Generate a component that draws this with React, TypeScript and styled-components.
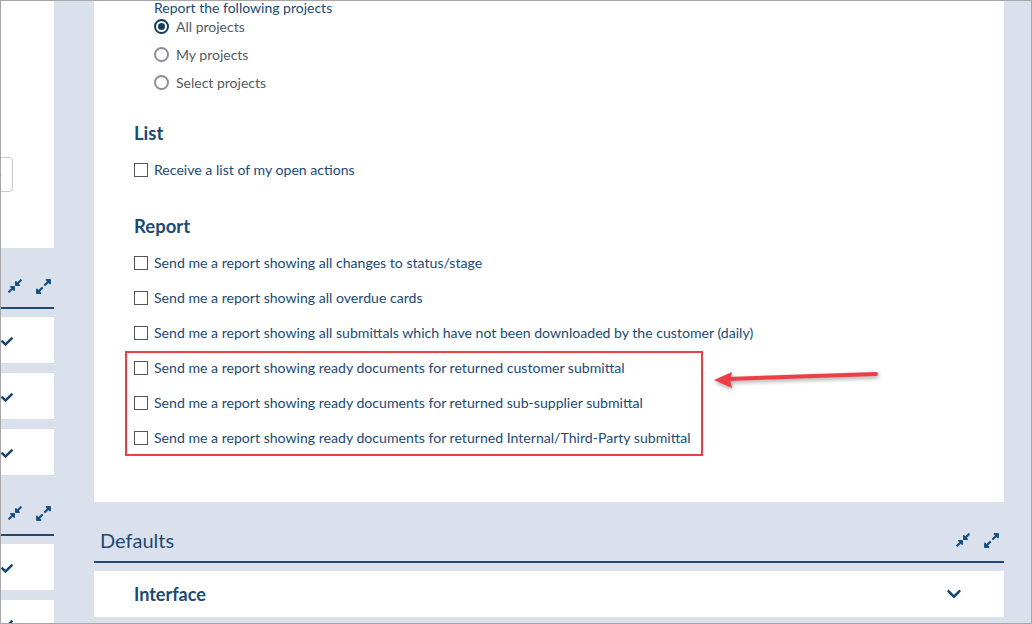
import React from 'react';
import styled, { createGlobalStyle } from 'styled-components';
import { FaCompressAlt, FaExpandAlt, FaCheck, FaChevronDown } from 'react-icons/fa';

const GlobalStyle = createGlobalStyle`
  html, body {
    margin: 0;
    padding: 0;
    background: #ffffff;
  }
  body {
    font-family: Lato, "Open Sans", "Liberation Sans", sans-serif;
    color: #1b4a74;
  }
`;

const NAVY = '#1b4a74';
const PAGE_BG = '#dbe1ec';

const Frame = styled.div`
  width: 1032px;
  height: 624px;
  box-sizing: border-box;
  border: 1px solid #a7a7a7;
  background: ${PAGE_BG};
  overflow: hidden;
  display: flex;
  gap: 40px;
`;

const LeftColumn = styled.div`
  width: 53px;
  flex-shrink: 0;
  display: flex;
  flex-direction: column;
  overflow: hidden;
`;

const MainColumn = styled.div`
  width: 910px;
  flex-shrink: 0;
  display: flex;
  flex-direction: column;
`;

const TopCard = styled.div`
  height: 247px;
  flex-shrink: 0;
  background: #ffffff;
  padding-top: 156px;
  box-sizing: border-box;
  overflow: hidden;
`;

const CutInput = styled.div`
  width: 42px;
  height: 35px;
  margin-left: -30px;
  box-sizing: border-box;
  border: 1px solid #c9c9c9;
  border-radius: 4px;
  display: flex;
  align-items: center;
  justify-content: flex-end;
  padding-right: 10px;
  color: #c4c4c4;
  font-size: 6px;
`;

const SectionHeader = styled.div`
  display: flex;
  align-items: center;
  height: 61px;
  flex-shrink: 0;
  box-sizing: border-box;
  padding: 26px 4px 9px 6px;
  border-bottom: 2px solid ${NAVY};
`;

const SectionTitle = styled.h2`
  margin: 0;
  flex: 1;
  font-size: 20px;
  line-height: 24px;
  font-weight: 400;
  color: ${NAVY};
`;

const HeaderIcons = styled.div`
  display: flex;
  align-items: center;
  gap: 12px;
  color: #17507f;
  margin-left: auto;
`;

const CollapsedRow = styled.div<{ $first?: boolean; $edge?: boolean }>`
  height: 46px;
  flex-shrink: 0;
  margin-top: ${({ $first }) => ($first ? '8px' : '10px')};
  background: #ffffff;
  display: flex;
  align-items: center;
  justify-content: ${({ $edge }) => ($edge ? 'flex-end' : 'flex-start')};
  padding: ${({ $edge }) => ($edge ? '2px 41px 0 0' : '0 42px 0 40px')};
  box-sizing: border-box;
  color: #12436f;
`;

const RowTitle = styled.div`
  flex: 1;
  font-size: 18px;
  font-weight: 700;
  color: ${NAVY};
  white-space: nowrap;
`;

const Panel = styled.div`
  position: relative;
  height: 501px;
  flex-shrink: 0;
  background: #ffffff;
  padding: 0 40px;
  box-sizing: border-box;
`;

const GroupLabel = styled.div`
  padding-left: 20px;
  font-size: 14px;
  line-height: 14px;
`;

const RadioList = styled.div`
  margin-top: -3px;
  padding-left: 20px;
`;

const RadioRow = styled.label`
  height: 28px;
  display: flex;
  align-items: center;
  gap: 7px;
  font-size: 14px;
  color: #555a66;
`;

const RadioDot = styled.span<{ $checked?: boolean }>`
  width: 15px;
  height: 15px;
  box-sizing: border-box;
  border-radius: 50%;
  border: 2px solid ${({ $checked }) => ($checked ? '#123b63' : '#8e8c99')};
  display: flex;
  align-items: center;
  justify-content: center;

  &::after {
    content: '';
    display: ${({ $checked }) => ($checked ? 'block' : 'none')};
    width: 7px;
    height: 7px;
    border-radius: 50%;
    background: #123b63;
  }
`;

const Heading = styled.h3<{ $space: number }>`
  margin: ${({ $space }) => $space}px 0 7px;
  font-size: 18.5px;
  line-height: 24px;
  font-weight: 700;
  color: ${NAVY};
`;

const CheckRow = styled.label`
  height: 35px;
  display: flex;
  align-items: center;
  gap: 6px;
  font-size: 14.1px;
  color: ${NAVY};
  white-space: nowrap;
`;

const Box = styled.span`
  width: 14px;
  height: 14px;
  flex-shrink: 0;
  box-sizing: border-box;
  border: 1px solid #555555;
  background: #ffffff;
`;

const Highlight = styled.div`
  position: relative;

  &::before {
    content: '';
    position: absolute;
    left: -9px;
    top: 1px;
    width: 578px;
    height: 105px;
    box-sizing: border-box;
    border: 2px solid #ee3e45;
    pointer-events: none;
  }
`;

const Arrow = styled.svg`
  position: absolute;
  left: 616px;
  top: 362px;
  overflow: visible;
  filter: drop-shadow(1px 2px 2px rgba(0, 0, 0, 0.35));
`;

const DefaultsGap = styled.div`
  height: 8px;
  flex-shrink: 0;
`;

const Check = ({ label }: { label: string }) => (
  <CheckRow>
    <Box />
    {label}
  </CheckRow>
);

const HeaderTools = () => (
  <HeaderIcons>
    <FaCompressAlt size={16} />
    <FaExpandAlt size={17} />
  </HeaderIcons>
);

export default function App() {
  return (
    <>
      <GlobalStyle />
      <Frame>
        <LeftColumn>
          <TopCard>
            <CutInput>›</CutInput>
          </TopCard>
          <SectionHeader>
            <HeaderTools />
          </SectionHeader>
          <CollapsedRow $first $edge>
            <FaCheck size={13} />
          </CollapsedRow>
          <CollapsedRow $edge>
            <FaCheck size={13} />
          </CollapsedRow>
          <CollapsedRow $edge>
            <FaCheck size={13} />
          </CollapsedRow>
          <SectionHeader>
            <HeaderTools />
          </SectionHeader>
          <CollapsedRow $first $edge>
            <FaCheck size={13} />
          </CollapsedRow>
          <CollapsedRow $edge>
            <FaCheck size={13} />
          </CollapsedRow>
        </LeftColumn>

        <MainColumn>
          <Panel>
            <GroupLabel>Report the following projects</GroupLabel>
            <RadioList>
              <RadioRow>
                <RadioDot $checked />
                All projects
              </RadioRow>
              <RadioRow>
                <RadioDot />
                My projects
              </RadioRow>
              <RadioRow>
                <RadioDot />
                Select projects
              </RadioRow>
            </RadioList>

            <Heading $space={25}>List</Heading>
            <Check label="Receive a list of my open actions" />

            <Heading $space={27}>Report</Heading>
            <Check label="Send me a report showing all changes to status/stage" />
            <Check label="Send me a report showing all overdue cards" />
            <Check label="Send me a report showing all submittals which have not been downloaded by the customer (daily)" />
            <Highlight>
              <Check label="Send me a report showing ready documents for returned customer submittal" />
              <Check label="Send me a report showing ready documents for returned sub-supplier submittal" />
              <Check label="Send me a report showing ready documents for returned Internal/Third-Party submittal" />
            </Highlight>

            <Arrow width="170" height="30" viewBox="0 0 170 30">
              <line x1="166" y1="11" x2="18" y2="16" stroke="#ee3e45" strokeWidth="4" strokeLinecap="round" />
              <polygon points="4,17 22,9 20,17 22,25" fill="#ee3e45" />
            </Arrow>
          </Panel>

          <SectionHeader>
            <SectionTitle>Defaults</SectionTitle>
            <HeaderTools />
          </SectionHeader>
          <DefaultsGap />
          <CollapsedRow style={{ marginTop: 0 }}>
            <RowTitle>Interface</RowTitle>
            <FaChevronDown size={16} />
          </CollapsedRow>
        </MainColumn>
      </Frame>
    </>
  );
}
